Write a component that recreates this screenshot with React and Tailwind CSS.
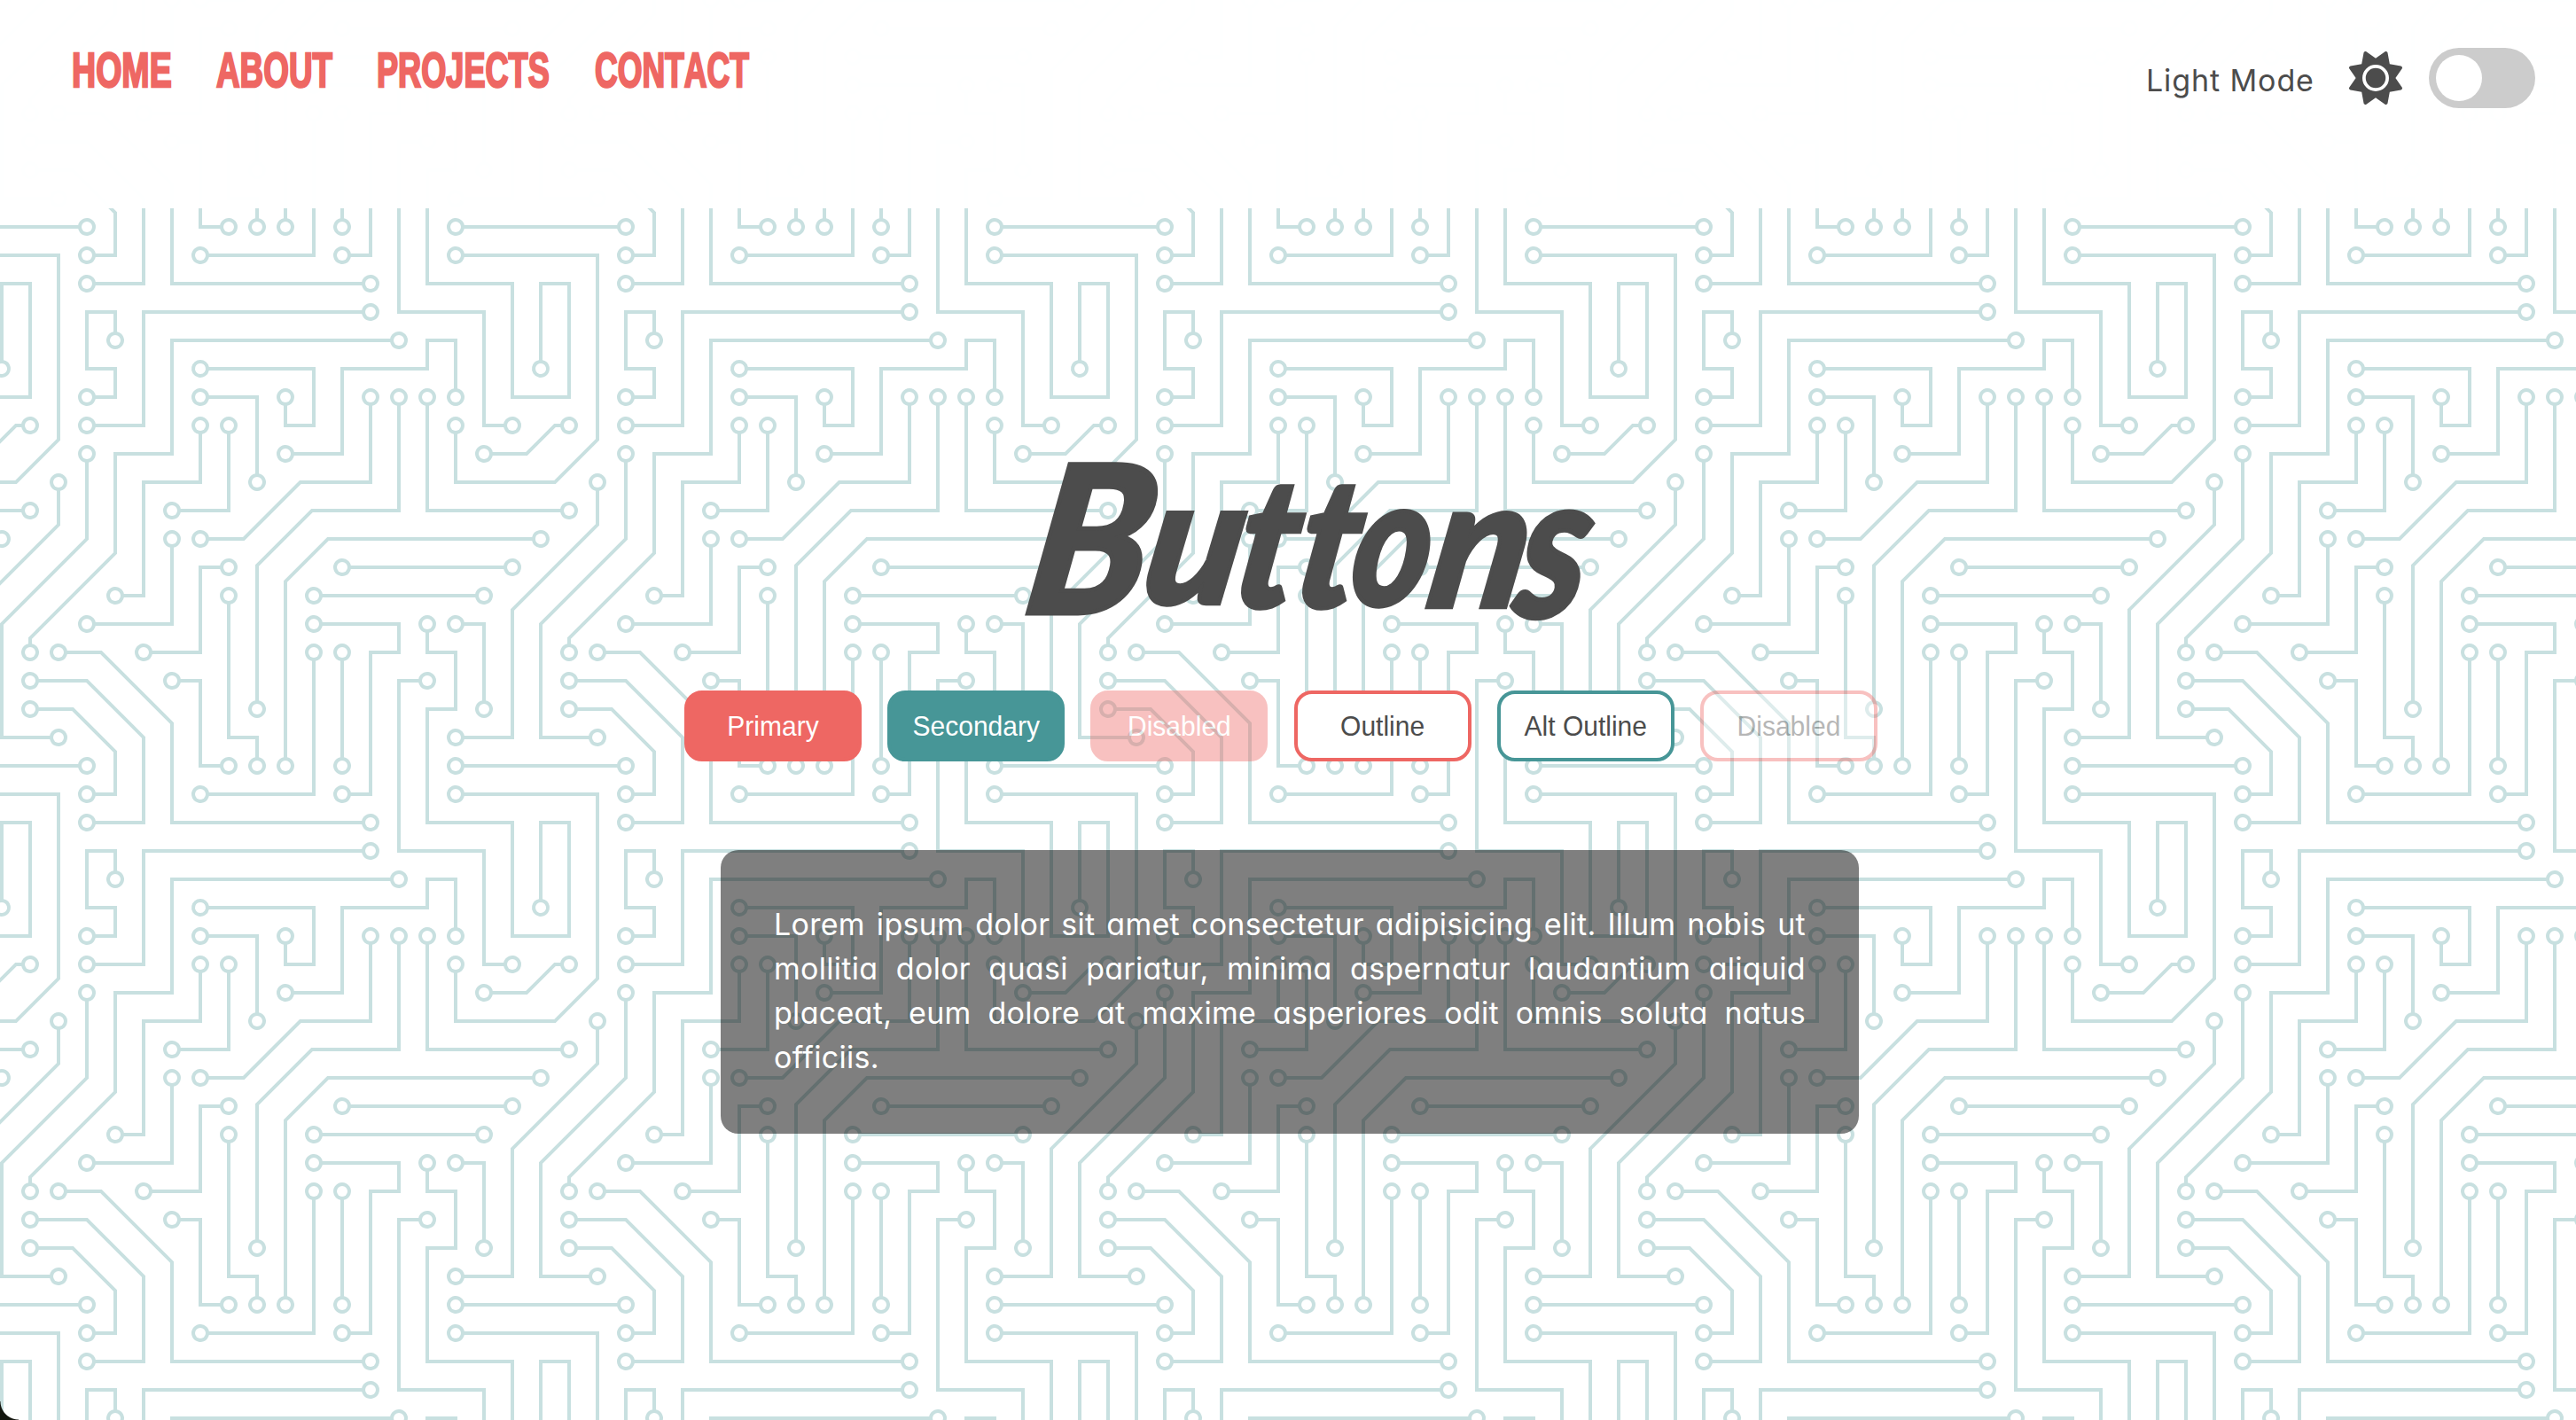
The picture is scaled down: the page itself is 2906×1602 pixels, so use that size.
import { FaSun } from "react-icons/fa6";

const TRACES =
  "M44.1 224a5 5 0 1 1 0 2H0v-2h44.1zm160 48a5 5 0 1 1 0 2H82v-2h122.1zm57.8-46a5 5 0 1 1 0-2H304v2h-42.1zm0 16a5 5 0 1 1 0-2H304v2h-42.1zm6.2-114a5 5 0 1 1 0 2h-86.2a5 5 0 1 1 0-2h86.2zm-256-48a5 5 0 1 1 0 2H0v-2h12.1zm185.8 34a5 5 0 1 1 0-2h86.2a5 5 0 1 1 0 2h-86.2zM258 12.1a5 5 0 1 1-2 0V0h2v12.1zm-64 208a5 5 0 1 1-2 0v-54.2a5 5 0 1 1 2 0v54.2zm48-198.2V80h62v2h-64V21.9a5 5 0 1 1 2 0zm16 16V64h46v2h-48V37.9a5 5 0 1 1 2 0zm-128 96V208h16v12.1a5 5 0 1 1-2 0V210h-16v-76.1a5 5 0 1 1 2 0zm-5.9-21.9a5 5 0 1 1 0 2H114v48H85.9a5 5 0 1 1 0-2H112v-48h12.1zm-6.2 130a5 5 0 1 1 0-2H176v-74.1a5 5 0 1 1 2 0V242h-60.1zm-16-64a5 5 0 1 1 0-2H114v48h10.1a5 5 0 1 1 0 2H112v-48h-10.1zM66 284.1a5 5 0 1 1-2 0V274H50v30h-2v-32h18v12.1zM236.1 176a5 5 0 1 1 0 2H226v94h48v32h-2v-30h-48v-98h12.1zm25.8-30a5 5 0 1 1 0-2H274v44.1a5 5 0 1 1-2 0V146h-10.1zm-64 96a5 5 0 1 1 0-2H208v-80h16v-14h-42.1a5 5 0 1 1 0-2H226v18h-16v80h-12.1zm86.2-210a5 5 0 1 1 0 2H272V0h2v32h10.1zM98 101.9V146H53.9a5 5 0 1 1 0-2H96v-42.1a5 5 0 1 1 2 0zM53.9 34a5 5 0 1 1 0-2H80V0h2v34H53.9zm60.1 3.9V66H82v64H69.9a5 5 0 1 1 0-2H80V64h32V37.9a5 5 0 1 1 2 0zM101.9 82a5 5 0 1 1 0-2H128V37.9a5 5 0 1 1 2 0V82h-28.1zm16-64a5 5 0 1 1 0-2H146v44.1a5 5 0 1 1-2 0V18h-26.1zm102.2 270a5 5 0 1 1 0 2H98v14h-2v-16h124.1zM242 149.9V160h16v34h-16v62h48v48h-2v-46h-48v-66h16v-30h-16v-12.1a5 5 0 1 1 2 0zM53.9 18a5 5 0 1 1 0-2H64V2H48V0h18v18H53.9zm112 32a5 5 0 1 1 0-2H192V0h50v2h-48v48h-28.1zm-48-48a5 5 0 0 1-9.8-2h2.07a3 3 0 1 0 5.66 0H178v34h-18V21.9a5 5 0 1 1 2 0V32h14V2h-58.1zm0 96a5 5 0 1 1 0-2H137l32-32h39V21.9a5 5 0 1 1 2 0V66h-40.17l-32 32H117.9zm28.1 90.1a5 5 0 1 1-2 0v-76.51L175.59 80H224V21.9a5 5 0 1 1 2 0V82h-49.59L146 112.41v75.69zm16 32a5 5 0 1 1-2 0v-99.51L184.59 96H300.1a5 5 0 0 1 3.9-3.9v2.07a3 3 0 0 0 0 5.66v2.07a5 5 0 0 1-3.9-3.9H185.41L162 121.41v98.69zm-144-64a5 5 0 1 1-2 0v-3.51l48-48V48h32V0h2v50H66v55.41l-48 48v2.69zM50 53.9v43.51l-48 48V208h26.1a5 5 0 1 1 0 2H0v-65.41l48-48V53.9a5 5 0 1 1 2 0zm-16 16V89.41l-34 34v-2.82l32-32V69.9a5 5 0 1 1 2 0zM12.1 32a5 5 0 1 1 0 2H9.41L0 43.41V40.6L8.59 32h3.51zm265.8 18a5 5 0 1 1 0-2h18.69l7.41-7.41v2.82L297.41 50H277.9zm-16 160a5 5 0 1 1 0-2H288v-71.41l16-16v2.82l-14 14V210h-28.1zm-208 32a5 5 0 1 1 0-2H64v-22.59L40.59 194H21.9a5 5 0 1 1 0-2H41.41L66 216.59V242H53.9zm150.2 14a5 5 0 1 1 0 2H96v-56.6L56.6 162H37.9a5 5 0 1 1 0-2h19.5L98 200.6V256h106.1zm-150.2 2a5 5 0 1 1 0-2H80v-46.59L48.59 178H21.9a5 5 0 1 1 0-2H49.41L82 208.59V258H53.9zM34 39.8v1.61L9.41 66H0v-2h8.59L32 40.59V0h2v39.8zM2 300.1a5 5 0 0 1 3.9 3.9H3.83A3 3 0 0 0 0 302.17V256h18v48h-2v-46H2v42.1zM34 241v63h-2v-62H0v-2h34v1zM17 18H0v-2h16V0h2v18h-1zm273-2h14v2h-16V0h2v16zm-32 273v15h-2v-14h-14v14h-2v-16h18v1zM0 92.1A5.02 5.02 0 0 1 6 97a5 5 0 0 1-6 4.9v-2.07a3 3 0 1 0 0-5.66V92.1zM80 272h2v32h-2v-32zm37.9 32h-2.07a3 3 0 0 0-5.66 0h-2.07a5 5 0 0 1 9.8 0zM5.9 0A5.02 5.02 0 0 1 0 5.9V3.83A3 3 0 0 0 3.83 0H5.9zm294.2 0h2.07A3 3 0 0 0 304 3.83V5.9a5 5 0 0 1-3.9-5.9zm3.9 300.1v2.07a3 3 0 0 0-1.83 1.83h-2.07a5 5 0 0 1 3.9-3.9z";

// Centres of the solder pads, punched out of the traces.
const PADS = [
  [49, 225], [209, 273], [257, 225], [257, 241], [273, 129], [177, 129], [17, 81], [193, 113], [289, 113],
  [257, 17], [193, 225], [193, 161], [241, 17], [257, 33], [129, 129], [145, 225], [129, 113], [81, 161],
  [113, 241], [177, 161], [97, 177], [129, 225], [65, 289], [241, 177], [257, 145], [273, 193], [193, 241],
  [177, 145], [289, 33], [97, 97], [49, 145], [49, 33], [113, 33], [65, 129], [97, 81], [129, 33],
  [113, 17], [145, 65], [225, 289], [241, 145], [49, 17], [161, 49], [161, 17], [113, 97], [209, 17],
  [145, 193], [225, 17], [161, 225], [17, 161], [49, 49], [33, 209], [33, 65], [17, 33], [273, 49],
  [257, 209], [49, 241], [17, 193], [209, 257], [33, 161], [49, 257], [17, 177],
];

function CircuitBackground() {
  return (
    <svg className="pointer-events-none absolute inset-0 -z-10 h-full w-full" aria-hidden="true">
      <defs>
        <pattern
          id="circuit"
          width="304"
          height="304"
          patternUnits="userSpaceOnUse"
          patternTransform="translate(0 -194) scale(2)"
        >
          <path d={TRACES} fill="#c8e0e0" />
          {PADS.map(([x, y]) => (
            <circle key={`${x}-${y}`} cx={x} cy={y} r="3" fill="#fff" />
          ))}
        </pattern>
      </defs>
      <rect width="100%" height="100%" fill="url(#circuit)" />
    </svg>
  );
}

const NAV = [
  { label: "HOME", box: "w-[163px]", fit: "scale-x-[0.683]" },
  { label: "ABOUT", box: "w-[181px]", fit: "scale-x-[0.67]" },
  { label: "PROJECTS", box: "w-[246px]", fit: "scale-x-[0.657]" },
  { label: "CONTACT", box: "w-[174px]", fit: "scale-x-[0.647]" },
];

function Header() {
  return (
    <header className="flex h-[235px] items-start justify-between bg-white/[0.985] pl-[81px] pr-[46px]">
      <nav className="mt-[44px] flex">
        {NAV.map(({ label, box, fit }) => (
          <a
            key={label}
            href="#"
            className={`${box} block whitespace-nowrap font-['Liberation_Sans',Arial,sans-serif] text-[55px] leading-[70px] font-bold text-[#ee6763] [-webkit-text-stroke:2.5px_#ee6763] [font-kerning:none]`}
          >
            <span className={`${fit} inline-block origin-left`}>{label}</span>
          </a>
        ))}
      </nav>
      <div className="mt-[54px] flex h-[68px] items-center text-[#4c4c4c]">
        <span className="mt-[4px] w-[190px] whitespace-nowrap font-[Inter,sans-serif] text-[34px] tracking-[0.9px]">
          Light Mode
        </span>
        <FaSun className="ml-[39px] size-[60px]" />
        <button className="ml-[30px] flex h-[68px] w-[120px] items-center rounded-full bg-[#ccc] pl-[8px]">
          <span className="size-[52px] rounded-full bg-white" />
        </button>
      </div>
    </header>
  );
}

const TITLE = [
  { char: "B", box: "w-[133px]", fit: "scale-x-[0.94] translate-y-[2px]" },
  { char: "u", box: "w-[103px]", fit: "scale-x-[0.86] scale-y-[0.86] -translate-y-[10px]" },
  { char: "t", box: "w-[69px]", fit: "scale-x-[0.8] scale-y-[0.88] -translate-y-[6px]" },
  { char: "t", box: "w-[63px]", fit: "scale-x-[0.8] scale-y-[0.88] -translate-y-[6px]" },
  { char: "o", box: "w-[87px]", fit: "scale-x-[0.72] scale-y-[0.88] -translate-y-[8px]" },
  { char: "n", box: "w-[99px]", fit: "scale-x-[0.86] scale-y-[0.88] -translate-y-[6px]" },
  { char: "s", box: "w-[90px]", fit: "scale-x-[0.82] scale-y-[0.98] translate-y-[6px]" },
];

const BUTTONS = [
  { label: "Primary", look: "border-[#ee6763] bg-[#ee6763] text-white" },
  { label: "Secondary", look: "border-[#479697] bg-[#479697] text-white" },
  { label: "Disabled", look: "border-[#ee6763] bg-[#ee6763] text-white opacity-40", disabled: true },
  { label: "Outline", look: "border-[#ee6763] bg-white text-[#4c4c4c]" },
  { label: "Alt Outline", look: "border-[#479697] bg-white text-[#4c4c4c]" },
  { label: "Disabled", look: "border-[#ee6763] bg-white text-[#4c4c4c] opacity-40", disabled: true },
];

const LINES = [
  "Lorem ipsum dolor sit amet consectetur adipisicing elit. Illum nobis ut",
  "mollitia dolor quasi pariatur, minima aspernatur laudantium aliquid",
  "placeat, eum dolore at maxime asperiores odit omnis soluta natus",
];

export default function App() {
  return (
    <div className="relative isolate h-[1602px] w-full overflow-hidden bg-white">
      <CircuitBackground />
      <Header />
      <main className="flex flex-col items-center">
        <h1
          aria-label="Buttons"
          className="mt-[265px] ml-[40px] flex h-[200px] w-[646px] whitespace-nowrap font-[Lato] text-[232px] leading-[200px] font-black text-[#4c4c4c] italic [-webkit-text-stroke:5px_#4c4c4c]"
        >
          {TITLE.map(({ char, box, fit }, i) => (
            <span key={i} className={`${box} block`}>
              <span className={`${fit} inline-block origin-bottom-left -skew-x-[10deg]`}>{char}</span>
            </span>
          ))}
        </h1>
        <div className="mt-[79px] mr-[16px] flex gap-[29.2px]">
          {BUTTONS.map(({ label, look, disabled }, i) => (
            <button
              key={i}
              disabled={disabled}
              className={`${look} h-[80px] w-[200px] rounded-[20px] border-4 font-['Liberation_Sans',Arial,sans-serif] text-[30px]`}
            >
              <span className="inline-block -translate-y-[1px] scale-y-[1.05]">{label}</span>
            </button>
          ))}
        </div>
        <section className="mt-[100px] ml-[4px] h-[320px] w-[1284px] rounded-[20px] bg-black/50 px-[60px] pt-[59px] font-[Inter,sans-serif] text-[34px] leading-[50px] tracking-[0.3px] text-white [font-feature-settings:'cv11']">
          {LINES.map((line) => (
            <p key={line} className="whitespace-nowrap [text-align-last:justify]">
              {line}
            </p>
          ))}
          <p>officiis.</p>
        </section>
      </main>
      <div className="absolute bottom-0 left-0 size-[21px] bg-[radial-gradient(circle_at_top_right,transparent_20px,#14160f_21px)]" />
    </div>
  );
}
